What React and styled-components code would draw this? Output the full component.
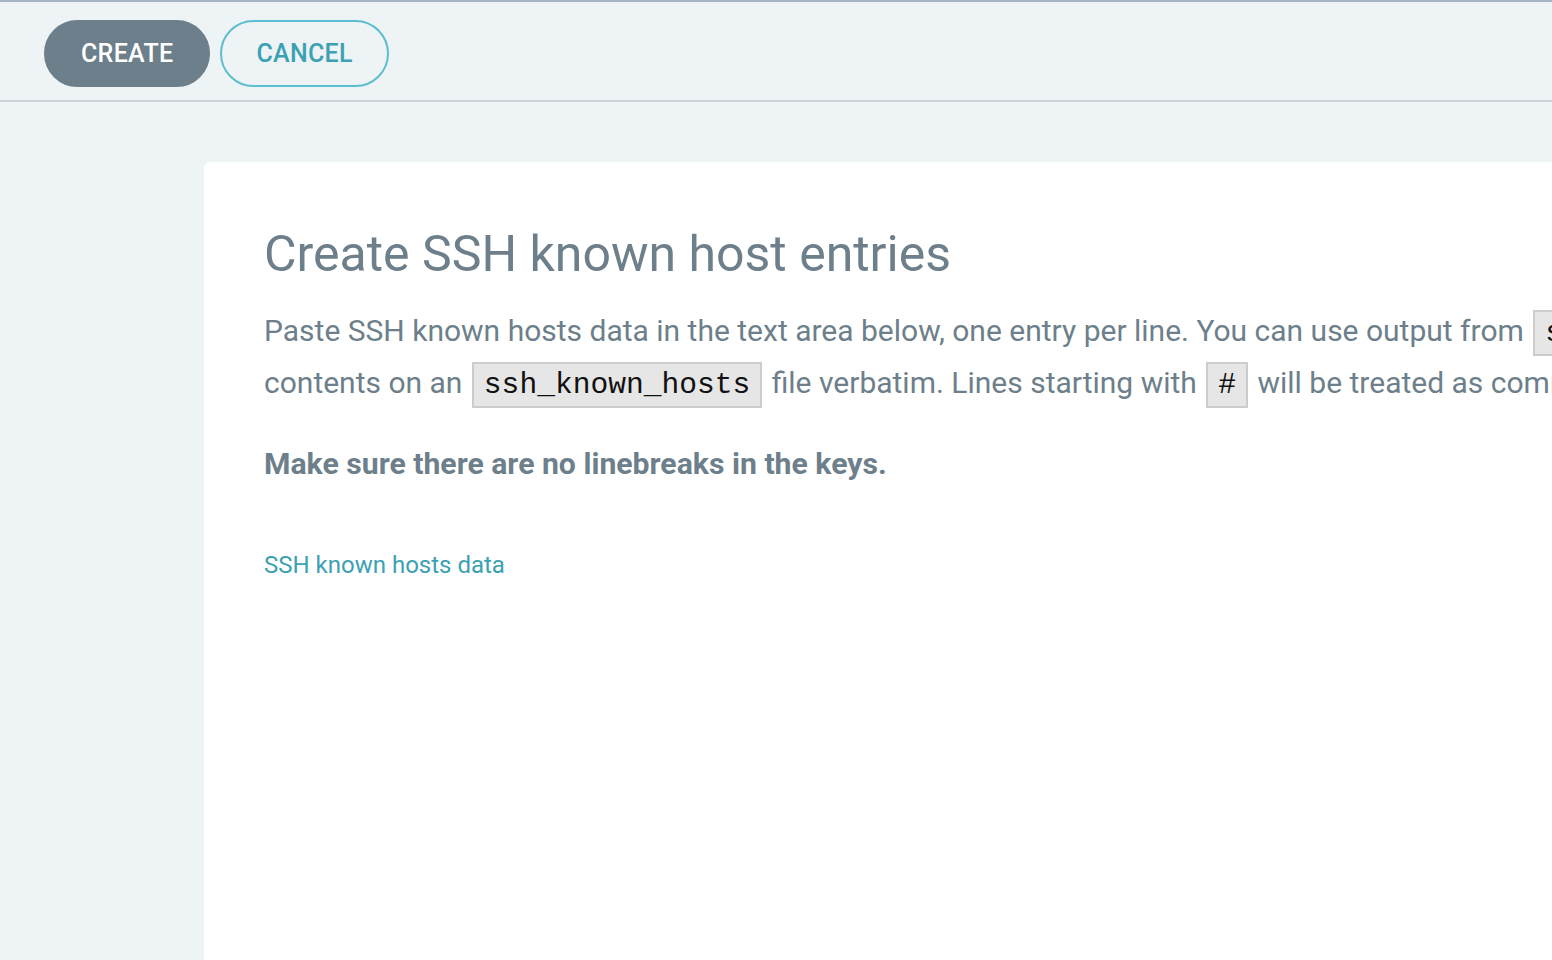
import React from 'react';
import styled, { createGlobalStyle } from 'styled-components';

const GlobalStyle = createGlobalStyle`
  html, body {
    margin: 0;
    padding: 0;
    background-color: #eef3f6;
    font-family: Roboto, "Liberation Sans", sans-serif;
  }
`;

const Page = styled.div`
  height: 100vh;
  border-top: 2px solid #a7b3c8;
  box-sizing: border-box;
  overflow: hidden;
  display: flex;
  flex-direction: column;
`;

const Toolbar = styled.div`
  flex: none;
  height: 80px;
  padding: 18px 0 0 44px;
  display: flex;
  align-items: flex-start;
  gap: 10px;
  border-bottom: 2px solid #ccd3d8;
`;

const Button = styled.button`
  height: 67px;
  padding: 0 ${({ $outline }) => ($outline ? '34px' : '35px')};
  border-radius: 34px;
  font-family: Roboto, "Liberation Sans", sans-serif;
  font-size: 25px;
  font-weight: 500;
  letter-spacing: 0.3px;
  border: 2px solid ${({ $outline }) => ($outline ? '#5cbfcf' : '#6d7f8b')};
  background-color: ${({ $outline }) => ($outline ? 'transparent' : '#6d7f8b')};
  color: ${({ $outline }) => ($outline ? '#3ca1b3' : '#fff')};
  cursor: pointer;
`;

const Content = styled.div`
  flex: 1;
  display: flex;
  padding: 60px 0 0 204px;
`;

const Card = styled.div`
  flex: 1;
  background-color: #fff;
  border-radius: 6px 0 0 0;
  padding: 64px 0 0 60px;
  white-space: nowrap;
  overflow: hidden;
`;

const Title = styled.h1`
  margin: 0;
  font-size: 50px;
  font-weight: 400;
  color: #6d7f8b;
  line-height: 56px;
`;

const Text = styled.p`
  margin: 24px 0 0;
  font-size: 30px;
  line-height: 50px;
  color: #6d7f8b;
`;

const Code = styled.code`
  font-family: "Liberation Mono", "DejaVu Sans Mono", monospace;
  font-size: 29.6px;
  color: #111;
  background-color: #e6e6e6;
  border: 2px solid #ccc;
  padding: 4px 10px;
  margin: 0 2px;
`;

const Warning = styled.p`
  margin: 36px 0 0;
  font-size: 30.2px;
  font-weight: 700;
  color: #6d7f8b;
`;

const Label = styled.label`
  display: block;
  margin-top: 70px;
  font-size: 24px;
  color: #3ca1b3;
`;

export default function App() {
  return (
    <>
      <GlobalStyle />
      <Page>
        <Toolbar>
          <Button>CREATE</Button>
          <Button $outline>CANCEL</Button>
        </Toolbar>
        <Content>
          <Card>
            <Title>Create SSH known host entries</Title>
            <Text>
              Paste SSH known hosts data in the text area below, one entry per line. You can use output from <Code>ssh-keyscan</Code> or the
              <br />
              contents on an <Code>ssh_known_hosts</Code> file verbatim. Lines starting with <Code>#</Code> will be treated as comments and ignored.
            </Text>
            <Warning>Make sure there are no linebreaks in the keys.</Warning>
            <Label>SSH known hosts data</Label>
          </Card>
        </Content>
      </Page>
    </>
  );
}
